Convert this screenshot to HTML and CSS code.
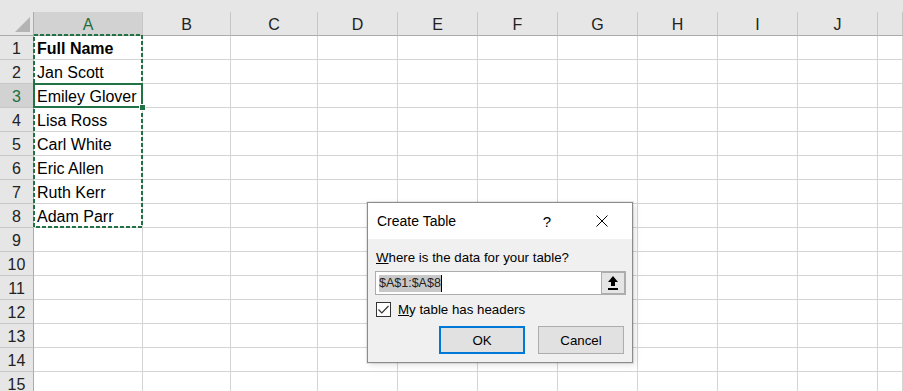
FILE: index.html
```html
<!DOCTYPE html>
<html lang="en">
<head>
    <meta charset="UTF-8">
    <title>Create Table</title>
    <link rel="stylesheet" href="styles.css">
</head>
<body>
    <div class="sheet">
        <div class="top-strip"></div>

        <div class="grid">
            <div class="corner"><span class="corner-tri"></span></div>
            <div class="col-head selected">A</div>
            <div class="col-head">B</div>
            <div class="col-head">C</div>
            <div class="col-head">D</div>
            <div class="col-head">E</div>
            <div class="col-head">F</div>
            <div class="col-head">G</div>
            <div class="col-head">H</div>
            <div class="col-head">I</div>
            <div class="col-head">J</div>
            <div class="col-head"></div>

            <div class="row-head">1</div><div class="cell bold">Full Name</div><div class="cell"></div><div class="cell"></div><div class="cell"></div><div class="cell"></div><div class="cell"></div><div class="cell"></div><div class="cell"></div><div class="cell"></div><div class="cell"></div><div class="cell"></div>
            <div class="row-head">2</div><div class="cell">Jan Scott</div><div class="cell"></div><div class="cell"></div><div class="cell"></div><div class="cell"></div><div class="cell"></div><div class="cell"></div><div class="cell"></div><div class="cell"></div><div class="cell"></div><div class="cell"></div>
            <div class="row-head selected">3</div><div class="cell">Emiley Glover</div><div class="cell"></div><div class="cell"></div><div class="cell"></div><div class="cell"></div><div class="cell"></div><div class="cell"></div><div class="cell"></div><div class="cell"></div><div class="cell"></div><div class="cell"></div>
            <div class="row-head">4</div><div class="cell">Lisa Ross</div><div class="cell"></div><div class="cell"></div><div class="cell"></div><div class="cell"></div><div class="cell"></div><div class="cell"></div><div class="cell"></div><div class="cell"></div><div class="cell"></div><div class="cell"></div>
            <div class="row-head">5</div><div class="cell">Carl White</div><div class="cell"></div><div class="cell"></div><div class="cell"></div><div class="cell"></div><div class="cell"></div><div class="cell"></div><div class="cell"></div><div class="cell"></div><div class="cell"></div><div class="cell"></div>
            <div class="row-head">6</div><div class="cell">Eric Allen</div><div class="cell"></div><div class="cell"></div><div class="cell"></div><div class="cell"></div><div class="cell"></div><div class="cell"></div><div class="cell"></div><div class="cell"></div><div class="cell"></div><div class="cell"></div>
            <div class="row-head">7</div><div class="cell">Ruth Kerr</div><div class="cell"></div><div class="cell"></div><div class="cell"></div><div class="cell"></div><div class="cell"></div><div class="cell"></div><div class="cell"></div><div class="cell"></div><div class="cell"></div><div class="cell"></div>
            <div class="row-head">8</div><div class="cell">Adam Parr</div><div class="cell"></div><div class="cell"></div><div class="cell"></div><div class="cell"></div><div class="cell"></div><div class="cell"></div><div class="cell"></div><div class="cell"></div><div class="cell"></div><div class="cell"></div>
            <div class="row-head">9</div><div class="cell"></div><div class="cell"></div><div class="cell"></div><div class="cell"></div><div class="cell"></div><div class="cell"></div><div class="cell"></div><div class="cell"></div><div class="cell"></div><div class="cell"></div><div class="cell"></div>
            <div class="row-head">10</div><div class="cell"></div><div class="cell"></div><div class="cell"></div><div class="cell"></div><div class="cell"></div><div class="cell"></div><div class="cell"></div><div class="cell"></div><div class="cell"></div><div class="cell"></div><div class="cell"></div>
            <div class="row-head">11</div><div class="cell"></div><div class="cell"></div><div class="cell"></div><div class="cell"></div><div class="cell"></div><div class="cell"></div><div class="cell"></div><div class="cell"></div><div class="cell"></div><div class="cell"></div><div class="cell"></div>
            <div class="row-head">12</div><div class="cell"></div><div class="cell"></div><div class="cell"></div><div class="cell"></div><div class="cell"></div><div class="cell"></div><div class="cell"></div><div class="cell"></div><div class="cell"></div><div class="cell"></div><div class="cell"></div>
            <div class="row-head">13</div><div class="cell"></div><div class="cell"></div><div class="cell"></div><div class="cell"></div><div class="cell"></div><div class="cell"></div><div class="cell"></div><div class="cell"></div><div class="cell"></div><div class="cell"></div><div class="cell"></div>
            <div class="row-head">14</div><div class="cell"></div><div class="cell"></div><div class="cell"></div><div class="cell"></div><div class="cell"></div><div class="cell"></div><div class="cell"></div><div class="cell"></div><div class="cell"></div><div class="cell"></div><div class="cell"></div>
            <div class="row-head">15</div><div class="cell"></div><div class="cell"></div><div class="cell"></div><div class="cell"></div><div class="cell"></div><div class="cell"></div><div class="cell"></div><div class="cell"></div><div class="cell"></div><div class="cell"></div><div class="cell"></div>
        </div>

        <!-- copy marquee around A1:A8 -->
        <svg class="marquee" width="903" height="391">
            <rect x="34" y="35" width="108" height="192" fill="none" stroke="#217346" stroke-width="2" stroke-dasharray="4 2"/>
        </svg>

        <!-- active cell A3 -->
        <div class="active-cell"><span class="fill-handle"></span></div>

        <div class="dialog">
            <div class="dialog-title">
                <span class="title-text">Create Table</span>
                <span class="help">?</span>
                <svg class="close" width="12" height="12" viewBox="0 0 12 12">
                    <path d="M0.5 0.5 L11.5 11.5 M11.5 0.5 L0.5 11.5" stroke="#000" stroke-width="1"/>
                </svg>
            </div>
            <div class="dialog-body">
                <div class="label"><u>W</u>here is the data for your table?</div>
                <div class="range-box">
                    <div class="range-text"><span class="sel-text">$A$1:$A$8</span><span class="caret"></span></div>
                    <div class="collapse-btn">
                        <svg width="12" height="16" viewBox="0 0 12 16">
                            <path d="M6 1 L11 7 L8 7 L8 11 L4 11 L4 7 L1 7 Z" fill="#000"/>
                            <rect x="1" y="13" width="10" height="2" fill="#000"/>
                        </svg>
                    </div>
                </div>
                <div class="check-row">
                    <span class="checkbox">
                        <svg width="13" height="13" viewBox="0 0 13 13">
                            <path d="M1.5 6.5 L4.8 9.8 L11.5 3" fill="none" stroke="#333" stroke-width="1.2"/>
                        </svg>
                    </span>
                    <span class="check-label"><u>M</u>y table has headers</span>
                </div>
                <div class="buttons">
                    <button class="btn default">OK</button>
                    <button class="btn">Cancel</button>
                </div>
            </div>
        </div>
    </div>
</body>
</html>
```

FILE: styles.css
```css
body, html {
    margin: 0;
    padding: 0;
    width: 100%;
    height: 100%;
    overflow: hidden;
    background-color: #ffffff;
    font-family: 'Liberation Sans', Arial, sans-serif;
}

.sheet {
    position: relative;
    width: 903px;
    height: 391px;
    overflow: hidden;
}

.top-strip {
    height: 12px;
    background-color: #e6e6e6;
}

.grid {
    display: grid;
    grid-template-columns: 34px 109px 88px 87px repeat(7, 80px) 1fr;
    grid-auto-rows: 24px;
    font-size: 16px;
    color: #000;
}

.grid > div {
    box-sizing: border-box;
}

.corner {
    position: relative;
    background-color: #e6e6e6;
    border-right: 1px solid #ababab;
    border-bottom: 1px solid #ababab;
}

    .corner-tri {
        position: absolute;
        right: 3px;
        bottom: 3px;
        width: 0;
        height: 0;
        border-left: 15px solid transparent;
        border-bottom: 15px solid #b4b4b4;
    }

.col-head {
    background-color: #e6e6e6;
    border-right: 1px solid #c6c6c6;
    border-bottom: 1px solid #ababab;
    padding-top: 2px;
    display: flex;
    align-items: center;
    justify-content: center;
    color: #222;
}

.row-head {
    background-color: #e6e6e6;
    border-right: 1px solid #ababab;
    border-bottom: 1px solid #c6c6c6;
    padding-top: 2px;
    display: flex;
    align-items: center;
    justify-content: center;
    color: #222;
}

.col-head.selected,
.row-head.selected {
    background-color: #d2d2d2;
    color: #1e6e40;
}

.cell {
    border-right: 1px solid #d4d4d4;
    border-bottom: 1px solid #d4d4d4;
    padding-left: 3px;
    padding-top: 2px;
    display: flex;
    align-items: center;
    white-space: nowrap;
}

    .cell.bold {
        font-weight: bold;
    }

.marquee {
    position: absolute;
    left: 0;
    top: 0;
    pointer-events: none;
}

.active-cell {
    position: absolute;
    left: 33px;
    top: 83px;
    width: 106px;
    height: 21px;
    border: 2px solid #217346;
}

    .fill-handle {
        position: absolute;
        right: -5px;
        bottom: -5px;
        width: 5px;
        height: 5px;
        background-color: #217346;
        border: 1px solid #fff;
    }

/* Create Table dialog */
.dialog {
    position: absolute;
    left: 367px;
    top: 202px;
    width: 266px;
    height: 161px;
    box-sizing: border-box;
    border: 1px solid #8c8c8c;
    background-color: #f0f0f0;
    box-shadow: 0 0 0 1px rgba(0, 0, 0, 0.08), 2px 2px 6px rgba(0, 0, 0, 0.12);
    display: flex;
    flex-direction: column;
    color: #000;
}

.dialog-title {
    height: 36px;
    background-color: #ffffff;
    display: flex;
    align-items: center;
    padding-left: 9px;
    font-size: 14px;
}

    .title-text {
        flex: 1;
    }

    .help {
        font-size: 15px;
        margin-right: 45px;
    }

    .close {
        margin-right: 24px;
    }

.dialog-body {
    padding: 0 6px 0 7px;
    font-size: 13.3px;
}

.label {
    margin-top: 11px;
    padding-left: 1px;
    line-height: 16px;
}

.range-box {
    margin-top: 5px;
    height: 24px;
    box-sizing: border-box;
    border: 1px solid #adadad;
    background-color: #ffffff;
    display: flex;
}

.range-text {
    flex: 1;
    display: flex;
    align-items: center;
    padding-left: 3px;
    font-size: 12.5px;
}

    .sel-text {
        background-color: #c8c8c8;
        color: #222;
        line-height: 17px;
    }

    .caret {
        width: 1px;
        height: 17px;
        background-color: #000;
    }

.collapse-btn {
    width: 25px;
    margin: -1px -1px -1px 0;
    box-sizing: border-box;
    border: 2px solid #adadad;
    border-left-width: 1px;
    background-color: #e5e5e5;
    display: flex;
    align-items: center;
    justify-content: center;
}

.check-row {
    margin-top: 6px;
    display: flex;
    align-items: center;
    height: 16px;
}

    .checkbox {
        width: 15px;
        height: 15px;
        box-sizing: border-box;
        border: 1px solid #333;
        background-color: #fff;
        margin-left: 1px;
        display: flex;
        align-items: center;
        justify-content: center;
    }

    .check-label {
        margin-left: 7px;
    }

.buttons {
    margin-top: 9px;
    margin-right: 2px;
    display: flex;
    justify-content: flex-end;
    gap: 13px;
}

.btn {
    width: 86px;
    height: 28px;
    box-sizing: border-box;
    border: 1px solid #adadad;
    background-color: #e1e1e1;
    font-family: 'Liberation Sans', Arial, sans-serif;
    font-size: 13.3px;
    color: #000;
    padding: 0;
}

    .btn.default {
        border: 2px solid #0078d7;
    }
```
